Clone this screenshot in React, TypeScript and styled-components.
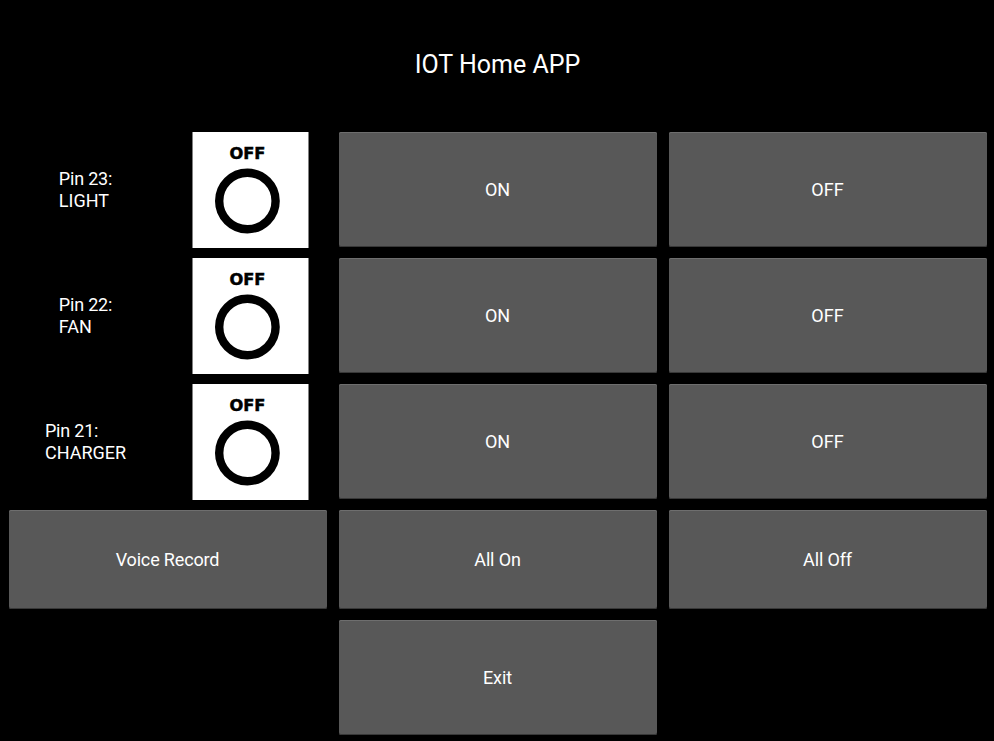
import React from "react";
import styled, { createGlobalStyle } from "styled-components";

const Global = createGlobalStyle`
  body { margin: 0; background: #000; overflow: hidden; }
  * { box-sizing: border-box; }
`;
const Page = styled.main`
  width: 994px;
  height: 741px;
  background: #000;
  color: #fff;
  font: 18px/22px Roboto, sans-serif;
`;
const Title = styled.h1`
  margin: 0;
  height: 132px;
  padding-bottom: 3px;
  padding-left: 1px;
  display: flex;
  align-items: center;
  justify-content: center;
  font-size: 25px;
  font-weight: 400;
`;
const Grid = styled.div`
  display: grid;
  grid-template-columns: repeat(3, 318px);
  grid-template-rows: repeat(3, 116px) 100px 116px;
  gap: 10px 12px;
  padding-left: 9px;
`;
const Button = styled.button<{ $column?: number; $tracking?: number }>`
  grid-column: ${({ $column }) => $column ?? "auto"};
  height: calc(100% - 1px);
  padding: 0 1px 0 0;
  border: 0;
  border-radius: 2px;
  background: #585858;
  box-shadow: inset 0 1px #6e6e6e, inset 0 -1px #383838;
  color: #fff;
  font: inherit;
  letter-spacing: ${({ $tracking }) => $tracking ?? 0}px;
`;
const Device = styled.div`
  display: grid;
  grid-template-columns: 153px 117px;
  column-gap: 30px;
`;
const Label = styled.div`
  display: flex;
  justify-content: center;
  align-items: center;
`;
const Pin = styled.span`
  display: block;
  letter-spacing: -0.2px;
`;
const Status = styled.svg`
  display: block;
  width: 117px;
  height: 116px;
`;

const devices = [
  { pin: 23, name: "LIGHT" },
  { pin: 22, name: "FAN" },
  { pin: 21, name: "CHARGER" },
];

export default function App() {
  return (
    <Page>
      <Global />
      <Title>IOT Home APP</Title>
      <Grid>
        {devices.map(({ pin, name }) => (
          <React.Fragment key={pin}>
            <Device>
              <Label>
                <div>
                  <Pin>Pin {pin}:</Pin>
                  {name}
                </div>
              </Label>
              <Status viewBox="0 0 117 116">
                <rect x="0.5" width="116" height="116" fill="#fff" />
                <text
                  x="37.4"
                  y="27.2"
                  fontFamily="DejaVu Sans, sans-serif"
                  fontWeight="700"
                  fontSize="16"
                  textLength="36"
                  lengthAdjust="spacingAndGlyphs"
                  stroke="#000"
                  strokeWidth="0.5"
                >
                  OFF
                </text>
                <circle cx="55.4" cy="69" r="28.2" fill="none" stroke="#000" strokeWidth="8.4" />
              </Status>
            </Device>
            <Button $tracking={-0.2}>ON</Button>
            <Button>OFF</Button>
          </React.Fragment>
        ))}
        <Button $tracking={-0.15}>Voice Record</Button>
        <Button $tracking={-0.15}>All On</Button>
        <Button $tracking={-0.15}>All Off</Button>
        <Button $column={2} $tracking={-0.1}>Exit</Button>
      </Grid>
    </Page>
  );
}
